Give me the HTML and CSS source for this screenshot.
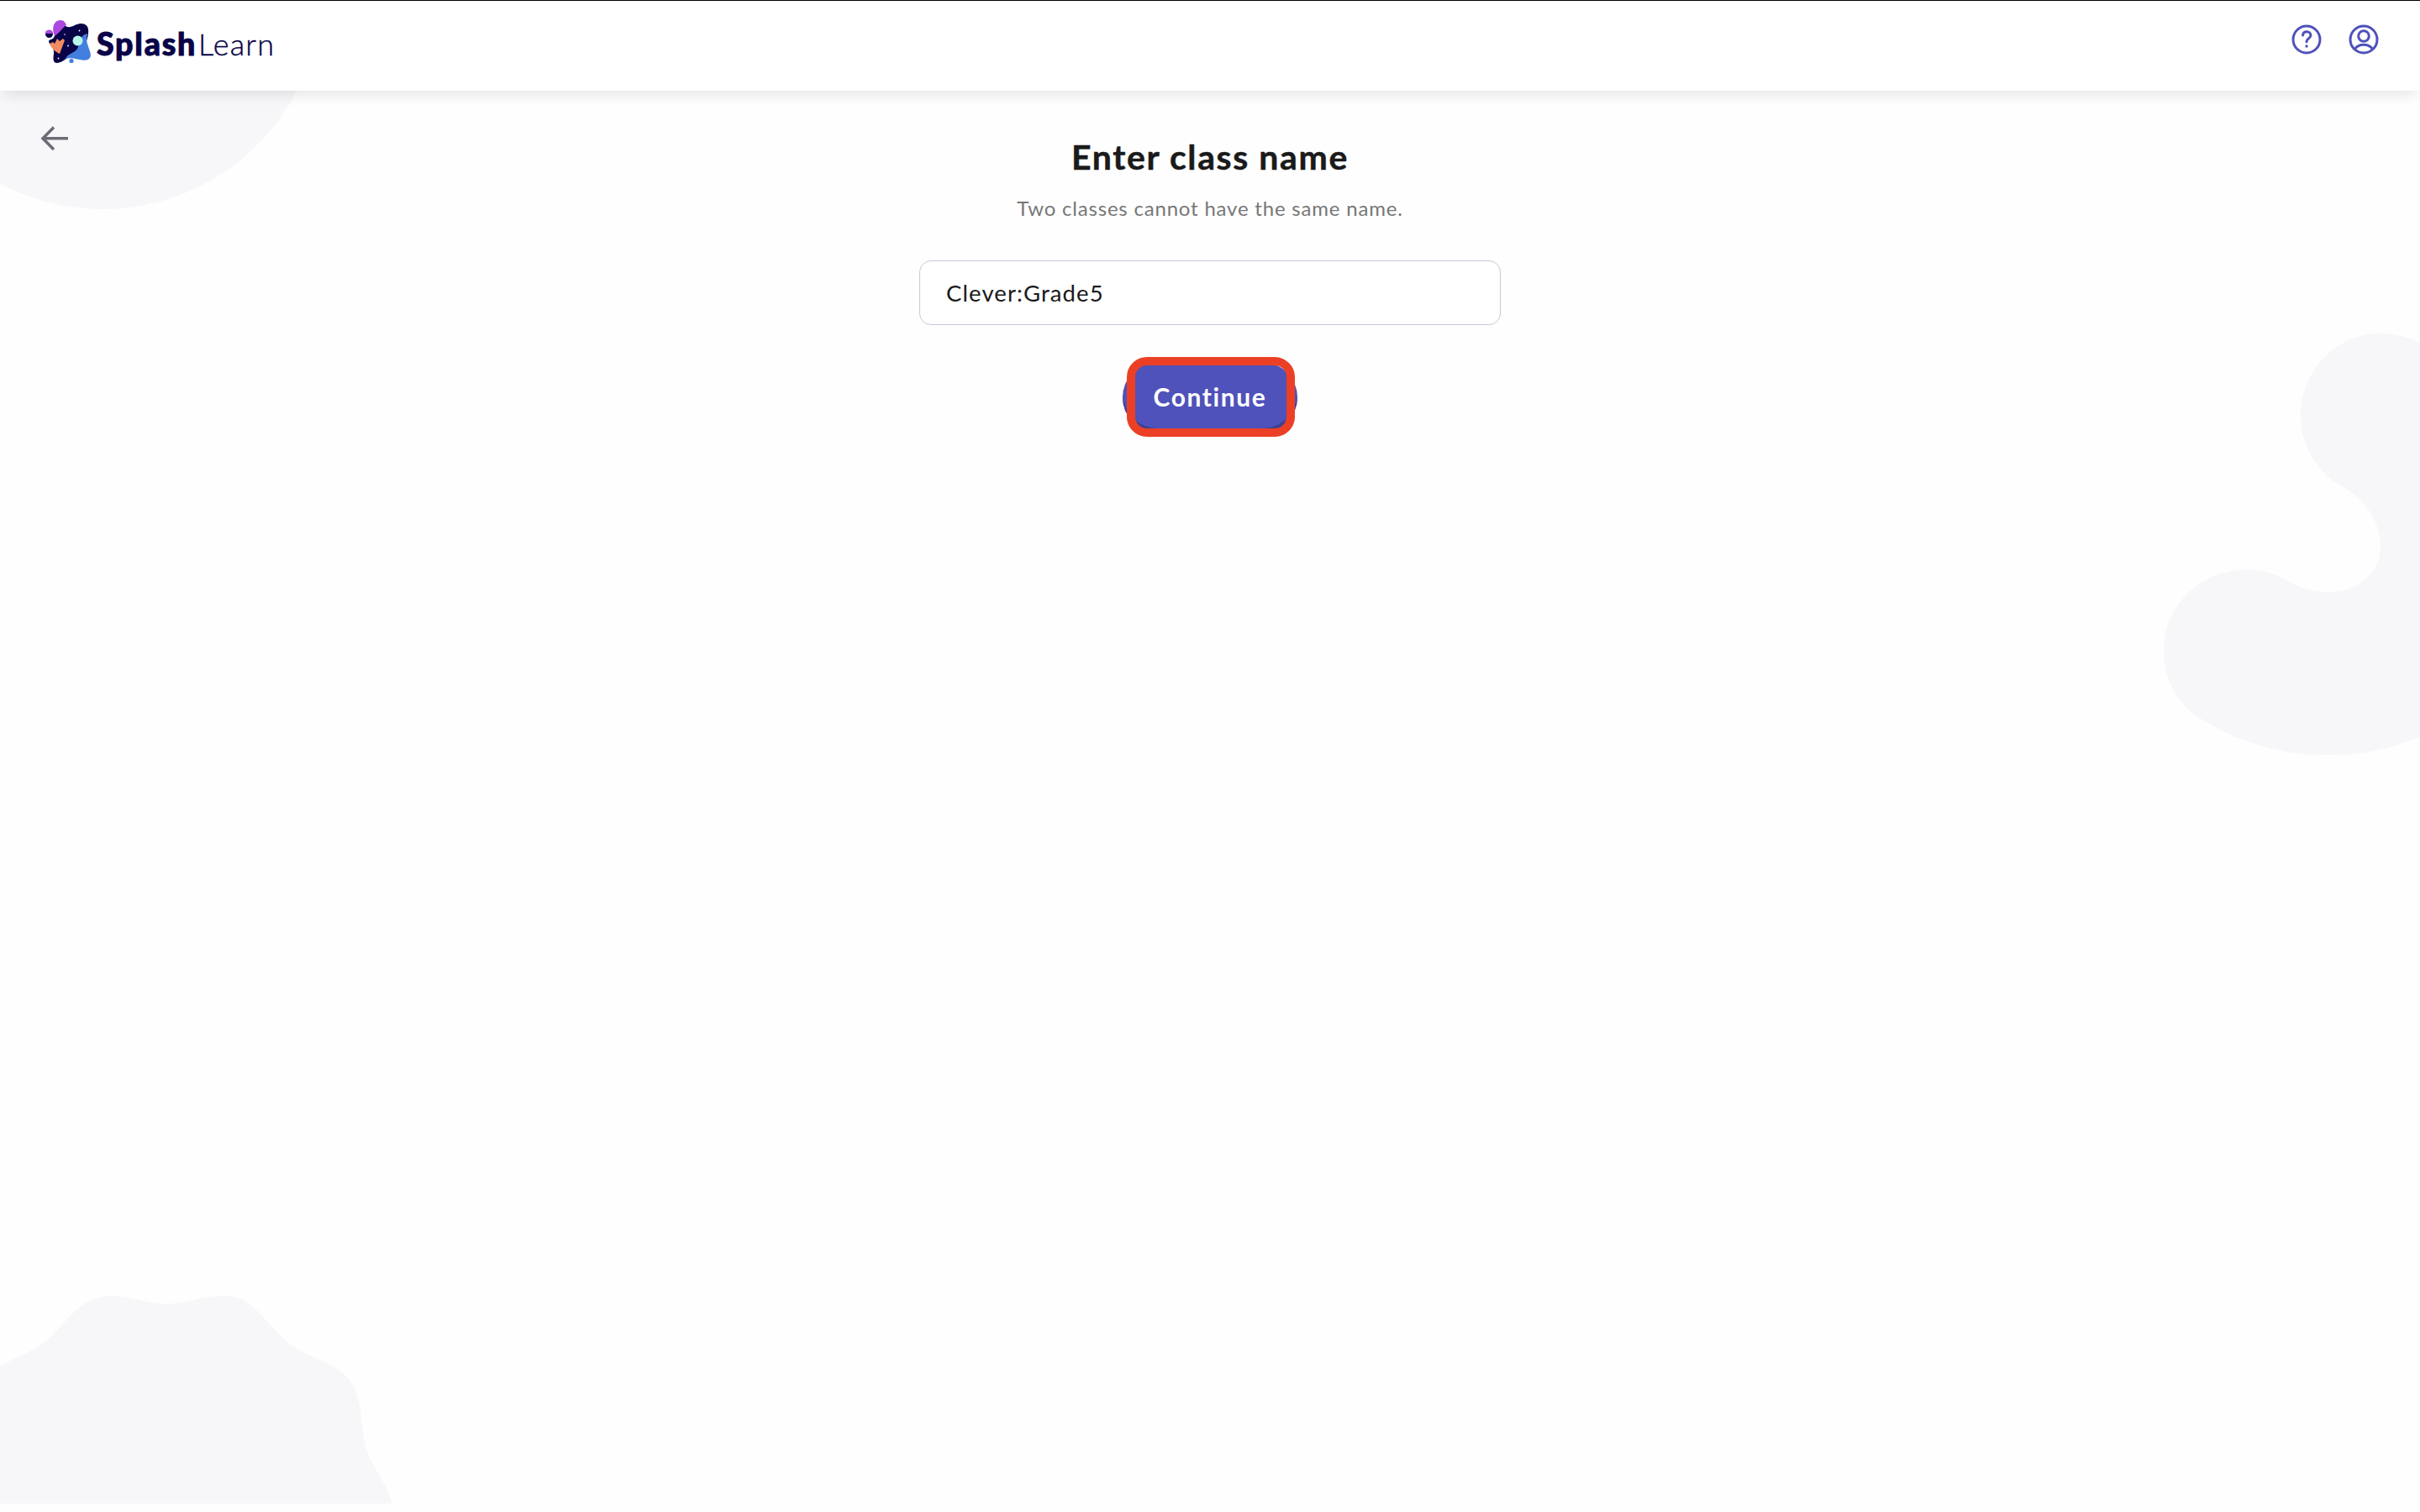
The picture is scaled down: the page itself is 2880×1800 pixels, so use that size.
FILE: index.html
```html
<!DOCTYPE html>
<html lang="en">
<head>
    <meta charset="UTF-8">
    <meta name="viewport" content="width=device-width, initial-scale=1.0">
    <title>SplashLearn</title>
    <link rel="stylesheet" href="styles.css">
</head>
<body>
    <header class="header">
        <a class="logo">
            <svg class="logo-mark" width="56" height="54" viewBox="0 0 56 54">
                <path fill="#090448" d="M11 18C16 10 20 6 24 7C30 11 36 4 42 4C49 4 52 8 51 16C50 27 43 38 34 40C26 43 23 50 14 51C9 51 9 46 10 40C11 31 4 29 4 25C5 22 10 24 11 18Z"/>
                <path fill="#427fdf" d="M50 16C46 29 57 38 53 45C47 52 34 43 24 46C27 39 34 40 38 34C42 28 40 18 50 16Z"/>
                <path fill="#ad49e1" d="M11 19C7 9 10 0 18 0C22 0 24 3 25 6C21 8 18 14 11 19Z"/>
                <circle cx="4.5" cy="16.5" r="4.5" fill="#090448"/>
                <path fill="#ad49e1" d="M0 16A4.5 4.5 0 0 1 9 16Z"/>
                <path fill="#f18b61" d="M5 28L9 26L11 28L14 22L17 25L21 22L23 24L17 40C13 38 8 35 5 28Z"/>
                <circle cx="38.5" cy="24.5" r="6" fill="#b8f6e8"/>
                <circle cx="31" cy="48.5" r="2.6" fill="#427fdf"/>
                <g fill="#fff">
                    <circle cx="23" cy="17" r=".8"/>
                    <circle cx="40.5" cy="12.5" r=".9"/>
                    <circle cx="27" cy="30.5" r=".9"/>
                    <circle cx="15.5" cy="45.5" r=".9"/>
                </g>
            </svg>
            <span class="logo-bold">Splash</span><span class="logo-light">Learn</span>
        </a>
        <nav class="header-icons">
            <svg width="36" height="36" viewBox="0 0 36 36" fill="none" stroke="#4f52ba" stroke-width="3" stroke-linecap="round">
                <circle cx="18" cy="18" r="16"/>
                <path d="M13.5 13C13.5 7 23 7.5 23 13.3C23 16.5 18 16.5 18 20.8"/>
                <circle cx="18" cy="26" r="1.7" fill="#4f52ba" stroke="none"/>
            </svg>
            <svg width="36" height="36" viewBox="0 0 36 36" fill="none" stroke="#4f52ba" stroke-width="3">
                <circle cx="18" cy="18" r="16"/>
                <circle cx="18" cy="14" r="6.3"/>
                <path d="M7.5 29.5C12 22.5 24 22.5 28.5 29.5"/>
            </svg>
        </nav>
    </header>

    <svg class="shape shape-top" width="400" height="142" viewBox="0 108 400 142">
        <circle cx="122" cy="-11" r="260"/>
    </svg>
    <svg class="shape shape-right" width="340" height="540" viewBox="0 0 340 540">
        <path d="M340 28Q318 17 293 17C240 17 198 61 198 115C198 151 218 182 247 199C276 215 293 242 293 271C293 304 264 325 230 325C213 325 197 320 183 312C168 303 151 298 133 298C79 298 35 341 35 395C35 431 54 462 83 478C127 506 181 519 232 519C270 519 306 512 340 497Z"/>
    </svg>
    <svg class="shape shape-bottom" width="500" height="290" viewBox="0 0 500 290">
        <path d="M0 126C18 116 36 110 50 100C76 82 92 43 130 43C163 43 170 52 198 52C229 52 232 43 270 43C302 43 318 79 344 99C369 118 402 123 416 143C433 166 429 203 436 225C443 247 461 266 466.5 290H0Z"/>
    </svg>

    <main class="main">
        <svg class="back" width="34" height="30" viewBox="0 0 34 30" fill="none" stroke="#6c6c76" stroke-width="3.5">
            <path d="M16 1.5L3 14.7L16 28M3 14.7H33"/>
        </svg>
        <div class="container">
            <h1>Enter class name</h1>
            <p class="hint">Two classes cannot have the same name.</p>
            <input class="class-name" type="text" value="Clever:Grade5">
            <div class="button-wrap">
                <button class="continue">Continue</button>
                <span class="highlight"></span>
            </div>
        </div>
    </main>
</body>
</html>
```
FILE: styles.css
```css
* {
    box-sizing: border-box;
}
body {
    margin: 0;
    height: 1800px;
    position: relative;
    overflow: hidden;
    background: #fefefe;
    font-family: Lato, sans-serif;
}
.header {
    position: relative;
    z-index: 2;
    height: 108px;
    display: flex;
    justify-content: space-between;
    align-items: flex-start;
    padding: 23px 49px 0 54px;
    border-top: 1px solid #000;
    background: #fff;
    box-shadow: 0 8px 16px -4px rgba(0, 0, 0, 0.11);
}
.logo {
    display: flex;
    color: #090448;
    font-size: 36px;
    line-height: 56px;
}
.logo-mark {
    margin-right: 5px;
}
.logo-bold {
    width: 121px;
    font-size: 37.5px;
    font-weight: 900;
    letter-spacing: 1.8px;
    -webkit-text-stroke: 1px #090448;
}
.logo-light {
    width: 96px;
    font-weight: 300;
    letter-spacing: 1.2px;
    -webkit-text-stroke: 0.4px #090448;
}
.header-icons {
    display: flex;
    gap: 32px;
    padding-top: 5px;
}
.shape {
    position: absolute;
    fill: #f7f7f9;
}
.shape-top {
    top: 108px;
    left: 0;
}
.shape-right {
    top: 380px;
    right: 0;
}
.shape-bottom {
    top: 1500px;
    left: 0;
}
.main {
    position: relative;
    display: grid;
    grid-template-columns: 1094px 692px 1094px;
}
.back {
    margin: 42px 0 0 48px;
}
.container {
    display: flex;
    flex-direction: column;
    align-items: center;
    padding-top: 55px;
}
h1 {
    margin: 0;
    color: #1a1a1a;
    font-size: 41px;
    line-height: 48px;
    font-weight: bold;
    letter-spacing: 1.6px;
    -webkit-text-stroke: 0.5px #1a1a1a;
    white-space: nowrap;
}
.hint {
    margin: 21px 0 46px;
    color: #777;
    font-size: 24px;
    line-height: 32px;
    letter-spacing: 0.8px;
    white-space: nowrap;
}
.class-name {
    width: 692px;
    height: 77px;
    padding: 0 31px;
    border: 1px solid #c9c8d9;
    border-radius: 14px;
    background: #fff;
    color: #1a1a1a;
    font-family: inherit;
    font-size: 27.5px;
    letter-spacing: 1.1px;
}
.button-wrap {
    position: relative;
    margin-top: 44px;
}
.continue {
    display: block;
    width: 208px;
    height: 84px;
    padding: 0 0 2px;
    border: none;
    border-radius: 42px;
    background: #4f52ba;
    box-shadow: inset 0 -5px 0 #3e3f92;
    color: #fff;
    font-family: inherit;
    font-size: 30px;
    font-weight: bold;
    letter-spacing: 1.6px;
}
.highlight {
    position: absolute;
    top: -6px;
    left: 5px;
    width: 200px;
    height: 95px;
    border: 10px solid #eb4026;
    border-radius: 24px;
}
```
